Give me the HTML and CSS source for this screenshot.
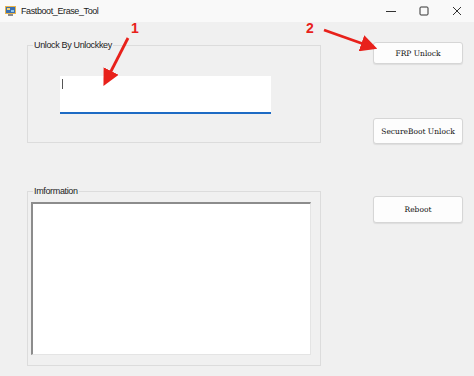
FILE: index.html
```html
<!DOCTYPE html>
<html lang="en">
<head>
    <meta charset="UTF-8">
    <title>Fastboot_Erase_Tool</title>
    <link rel="stylesheet" href="styles.css">
</head>
<body>
<div class="window">
    <div class="titlebar">
        <svg class="app-icon" width="11" height="10" viewBox="0 0 11 10">
            <rect x="0" y="0" width="11" height="8" fill="#e9b44c"/>
            <rect x="1" y="1" width="9" height="6" fill="#3a6fb0"/>
            <rect x="2" y="2" width="3" height="2" fill="#f4d27a"/>
            <rect x="6" y="4" width="3" height="2" fill="#8fc5ea"/>
            <rect x="3" y="8" width="5" height="2" fill="#8a8a8a"/>
        </svg>
        <span class="title">Fastboot_Erase_Tool</span>
        <div class="controls">
            <span class="ctl">
                <svg width="10" height="10" viewBox="0 0 10 10"><path d="M0 5.5h10" stroke="#333" stroke-width="1"/></svg>
            </span>
            <span class="ctl">
                <svg width="10" height="10" viewBox="0 0 10 10"><rect x="1" y="1" width="8" height="8" rx="1" fill="none" stroke="#333" stroke-width="1"/></svg>
            </span>
            <span class="ctl">
                <svg width="10" height="10" viewBox="0 0 10 10"><path d="M1 1L9 9M9 1L1 9" stroke="#333" stroke-width="1"/></svg>
            </span>
        </div>
    </div>

    <div class="client">
        <div class="left">
            <div class="group group-key">
                <span class="group-title">Unlock By Unlockkey</span>
                <div class="keybox"><span class="caret"></span></div>
            </div>
            <div class="group group-info">
                <span class="group-title">Imformation</span>
                <div class="infobox"></div>
            </div>
        </div>
        <div class="right">
            <button class="btn btn-frp">FRP Unlock</button>
            <button class="btn btn-secure">SecureBoot Unlock</button>
            <button class="btn btn-reboot">Reboot</button>
        </div>
    </div>

    <!-- red annotations drawn over the form -->
    <svg class="marks" width="474" height="376" viewBox="0 0 474 376">
        <defs>
            <marker id="head" markerWidth="6" markerHeight="6" refX="4" refY="3" orient="auto" markerUnits="strokeWidth">
                <path d="M0 0L6 3L0 6z" fill="#e8211b"/>
            </marker>
        </defs>
        <text x="131" y="33" class="num">1</text>
        <line x1="128" y1="38" x2="106" y2="81" stroke="#e8211b" stroke-width="2.8" marker-end="url(#head)"/>
        <text x="306" y="33" class="num">2</text>
        <line x1="324" y1="30" x2="372" y2="47" stroke="#e8211b" stroke-width="2.8" marker-end="url(#head)"/>
    </svg>
</div>
</body>
</html>
```

FILE: styles.css
```css
body {
    margin: 0;
    font-family: "Liberation Sans", Arial, sans-serif;
}

.window {
    position: relative;
    width: 474px;
    height: 376px;
    background-color: #f0f0f0;
    overflow: hidden;
}

.titlebar {
    height: 22px;
    background-color: #f9f9f9;
    display: flex;
    align-items: center;
    font-size: 9px;
    letter-spacing: -0.4px;
    color: #1a1a1a;
}

.app-icon {
    margin-left: 5px;
    margin-right: 5px;
}

.title {
    flex: 1;
}

.controls {
    display: flex;
    margin-right: 12px;
    gap: 23px;
}

.ctl {
    display: flex;
}

.client {
    display: flex;
}

.left {
    margin-left: 27px;
    width: 294px;
}

.group {
    box-sizing: border-box;
    border: 1px solid #dcdcdc;
}

.group-title {
    display: block;
    width: fit-content;
    height: 10px;
    margin: -6px 0 0 5px;
    padding: 0 1px;
    background-color: #f0f0f0;
    font-size: 9px;
    letter-spacing: -0.35px;
    line-height: 10px;
    color: #222;
}

.group-key {
    margin-top: 23px;
    height: 98px;
}

.keybox {
    box-sizing: border-box;
    width: 211px;
    height: 38px;
    margin: 26px 0 0 32px;
    background-color: #ffffff;
    border-bottom: 2px solid #1d6bc4;
    padding: 3px 0 0 2px;
}

.caret {
    display: block;
    width: 1px;
    height: 10px;
    background-color: #555;
}

.group-info {
    margin-top: 48px;
    height: 175px;
}

.infobox {
    box-sizing: border-box;
    width: 280px;
    height: 153px;
    margin: 6px 0 0 3px;
    background-color: #ffffff;
    border-top: 2px solid #8c8c8c;
    border-left: 2px solid #8c8c8c;
    border-right: 1px solid #e4e4e4;
    border-bottom: 1px solid #e4e4e4;
}

.right {
    display: flex;
    flex-direction: column;
    margin-left: 52px;
}

.btn {
    box-sizing: border-box;
    width: 90px;
    background-color: #fdfdfd;
    border: 1px solid #d6d6d6;
    border-radius: 3px;
    box-shadow: 0 1px 1px rgba(0, 0, 0, 0.08);
    font-family: "DejaVu Serif", Georgia, serif;
    font-size: 7.5px;
    color: #111;
    padding: 0;
}

.btn-frp {
    margin-top: 20px;
    height: 22px;
}

.btn-secure {
    margin-top: 54px;
    height: 26px;
}

.btn-reboot {
    margin-top: 52px;
    height: 27px;
}

.marks {
    position: absolute;
    left: 0;
    top: 0;
}

.num {
    font-family: "Liberation Sans", Arial, sans-serif;
    font-weight: bold;
    font-size: 14px;
    fill: #e8211b;
}
```
